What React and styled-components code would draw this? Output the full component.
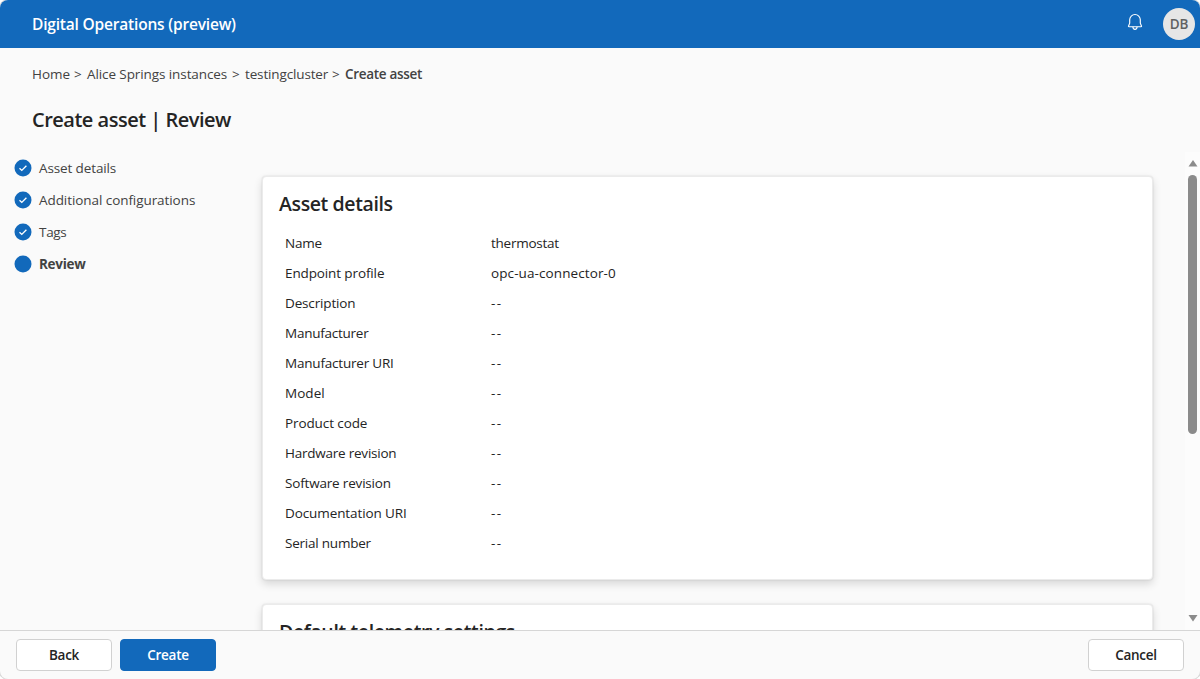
import React from "react";
import styled, { createGlobalStyle, css } from "styled-components";

const BLUE = "#1269bb";

const GlobalStyle = createGlobalStyle`
  *, *::before, *::after { box-sizing: border-box; }
  html, body { margin: 0; padding: 0; background: #fff; overflow: hidden; }
  body { font-family: "Segoe UI", "Open Sans", "Noto Sans", sans-serif; font-size: 13.5px; color: #242424; }
`;

const Window = styled.div`
  display: flex;
  flex-direction: column;
  width: 1200px;
  height: 679px;
  background: #fafafa;
  border-radius: 8px;
  box-shadow: 0 0 0 1px #d9d9d9;
  overflow: hidden;
`;

const TopBar = styled.header`
  display: flex;
  flex: none;
  align-items: center;
  justify-content: space-between;
  height: 48px;
  padding: 0 5px 0 32px;
  background: ${BLUE};
  color: #fff;
`;

const Brand = styled.div`
  font-size: 15.5px;
  font-weight: 600;
  letter-spacing: -0.19px;
  white-space: nowrap;
`;

const TopActions = styled.div`
  display: flex;
  align-items: center;
  gap: 18px;
`;

const BellIcon = styled.svg`
  display: block;
  width: 20px;
  height: 20px;
  margin-bottom: 4px;
`;

const Avatar = styled.div`
  display: grid;
  place-items: center;
  width: 32px;
  height: 32px;
  border-radius: 50%;
  background: #e6e6e6;
  color: #616161;
  font-size: 13.5px;
  font-weight: 600;
  letter-spacing: -0.2px;
`;

const Breadcrumb = styled.nav`
  display: flex;
  flex: none;
  height: 20px;
  margin: 16px 0 0 32px;
  line-height: 20px;
  color: #424242;
  white-space: nowrap;
`;

const Crumb = styled.span`
  width: ${(p) => (p.$w ? `${p.$w}px` : "auto")};
  letter-spacing: ${(p) => p.$track || 0}px;
  ${(p) => p.$current && css`font-weight: 600;`}
`;

const PageTitle = styled.h1`
  flex: none;
  margin: 22px 0 0 32px;
  font-size: 20px;
  font-weight: 600;
  line-height: 28px;
  letter-spacing: -0.5px;
`;

const Body = styled.div`
  display: flex;
  flex: 1;
  min-height: 0;
  padding-top: 18px;
`;

const Steps = styled.ol`
  flex: none;
  width: 254px;
  margin: 0;
  padding: 0 0 0 14px;
  list-style: none;
`;

const Step = styled.li`
  display: flex;
  align-items: center;
  gap: 7px;
  height: 32px;
  color: #424242;
  letter-spacing: ${(p) => p.$track || 0}px;
  font-weight: ${(p) => (p.$current ? 700 : 400)};
`;

const StepIcon = styled.svg`
  display: block;
  width: 18px;
  height: 18px;
`;

const Scroller = styled.main`
  flex: 1;
  min-width: 0;
  padding: 24px 0 0 8px;
  overflow: hidden;
`;

const Card = styled.section`
  width: 891px;
  height: 404px;
  margin-bottom: 24px;
  padding: 13px 16px;
  background: #fff;
  border: 1px solid #ebebeb;
  border-radius: 4px;
  box-shadow: 0 0 2px rgba(0, 0, 0, 0.12), 0 4px 8px rgba(0, 0, 0, 0.14);
`;

const CardTitle = styled.h2`
  margin: 0 0 10px;
  font-size: 19.5px;
  font-weight: 600;
  line-height: 28px;
  letter-spacing: -0.38px;
`;

const Details = styled.dl`
  margin: 0;
  padding-left: 6px;
`;

const DetailRow = styled.div`
  display: grid;
  grid-template-columns: 206px 1fr;
  height: 30px;
  line-height: 30px;
`;

const Term = styled.dt`
  letter-spacing: ${(p) => p.$track || 0}px;
`;

const Value = styled.dd`
  margin: 0;
  letter-spacing: ${(p) => p.$track || 0}px;
`;

const ScrollTrack = styled.div`
  display: flex;
  flex: none;
  flex-direction: column;
  align-items: center;
  width: 15px;
  padding: 7px 0 8px;
  background: #fcfcfc;
`;

const Arrow = styled.svg`
  display: block;
  flex: none;
  width: 10px;
  height: 8px;
`;

const Thumb = styled.div`
  width: 9px;
  height: 259px;
  margin: 8px 0 auto;
  border-radius: 5px;
  background: #8b8b8b;
`;

const Footer = styled.footer`
  display: flex;
  flex: none;
  align-items: flex-start;
  gap: 8px;
  height: 49px;
  padding: 8px 16px 0;
  border-top: 1px solid #d6d6d6;
`;

const Button = styled.button`
  width: 96px;
  height: 32px;
  margin: 0;
  padding: 0 0 1px;
  border: 1px solid ${(p) => (p.$primary ? BLUE : "#d1d1d1")};
  border-radius: 4px;
  background: ${(p) => (p.$primary ? BLUE : "#fff")};
  color: ${(p) => (p.$primary ? "#fff" : "#242424")};
  font-family: inherit;
  font-size: 13.5px;
  font-weight: 600;
  letter-spacing: -0.25px;
  ${(p) => p.$end && css`margin-left: auto;`}
`;

const steps = [
  { label: "Asset details", done: true, track: -0.12 },
  { label: "Additional configurations", done: true, track: -0.07 },
  { label: "Tags", done: true, track: -0.3 },
  { label: "Review", done: false, track: -0.3 },
];

const details = [
  ["Name", "thermostat", -0.2, -0.25],
  ["Endpoint profile", "opc-ua-connector-0", -0.12, 0.1],
  ["Description", "--", -0.15, 1.4],
  ["Manufacturer", "--", -0.25, 1.4],
  ["Manufacturer URI", "--", -0.2, 1.4],
  ["Model", "--", 0.05, 1.4],
  ["Product code", "--", -0.1, 1.4],
  ["Hardware revision", "--", -0.23, 1.4],
  ["Software revision", "--", -0.18, 1.4],
  ["Documentation URI", "--", -0.1, 1.4],
  ["Serial number", "--", -0.22, 1.4],
];

export default function App() {
  return (
    <>
      <GlobalStyle />
      <Window>
        <TopBar>
          <Brand>Digital Operations (preview)</Brand>
          <TopActions>
            <BellIcon viewBox="0 0 20 20" fill="none" stroke="#fff" strokeWidth="1.15">
              <path d="M10 2.500a5.300 5.300 0 0 0-5.300 5.300v3.400L3.500 14.100c-.1.3.1.6.4.6h12.200c.3 0 .5-.3.4-.6l-1.200-2.900V7.800A5.300 5.300 0 0 0 10 2.500z" />
              <path d="M7.900 14.800a2.100 2.500 0 0 0 4.200 0" />
            </BellIcon>
            <Avatar>DB</Avatar>
          </TopActions>
        </TopBar>
        <Breadcrumb>
          <Crumb $w={42}>Home</Crumb>
          <Crumb $w={13}>&gt;</Crumb>
          <Crumb $w={145} $track={-0.09}>Alice Springs instances</Crumb>
          <Crumb $w={13}>&gt;</Crumb>
          <Crumb $w={87} $track={-0.14}>testingcluster</Crumb>
          <Crumb $w={13}>&gt;</Crumb>
          <Crumb $current $track={-0.3}>Create asset</Crumb>
        </Breadcrumb>
        <PageTitle>Create asset | Review</PageTitle>
        <Body>
          <Steps>
            {steps.map((s) => (
              <Step key={s.label} $current={!s.done} $track={s.track}>
                <StepIcon viewBox="0 0 18 18">
                  <circle cx="9" cy="9" r="8.500" fill={BLUE} />
                  {s.done && (
                    <path d="M5.500 9.200l2.300 2.200 4.600-4.600" fill="none" stroke="#fff" strokeWidth="1.350" />
                  )}
                </StepIcon>
                <span>{s.label}</span>
              </Step>
            ))}
          </Steps>
          <Scroller>
            <Card>
              <CardTitle>Asset details</CardTitle>
              <Details>
                {details.map(([term, value, termTrack, valueTrack]) => (
                  <DetailRow key={term}>
                    <Term $track={termTrack}>{term}</Term>
                    <Value $track={valueTrack}>{value}</Value>
                  </DetailRow>
                ))}
              </Details>
            </Card>
            <Card>
              <CardTitle>Default telemetry settings</CardTitle>
            </Card>
          </Scroller>
          <ScrollTrack>
            <Arrow viewBox="0 0 10 8"><path d="M5 1l4.500 6.500h-9z" fill="#8b8b8b" /></Arrow>
            <Thumb />
            <Arrow viewBox="0 0 10 8"><path d="M5 7.500L.5 1h9z" fill="#8b8b8b" /></Arrow>
          </ScrollTrack>
        </Body>
        <Footer>
          <Button>Back</Button>
          <Button $primary>Create</Button>
          <Button $end>Cancel</Button>
        </Footer>
      </Window>
    </>
  );
}
